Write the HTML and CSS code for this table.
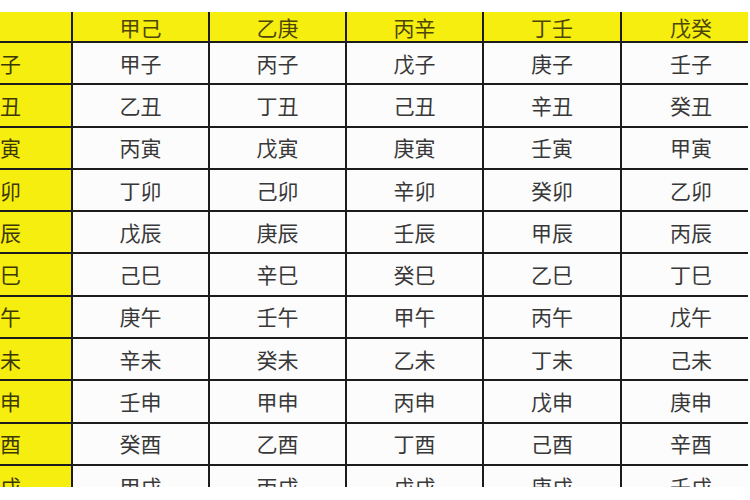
FILE: index.html
```html
<!DOCTYPE html>
<html lang="zh">
<head>
<meta charset="utf-8">
<link rel="stylesheet" href="styles.css">
</head>
<body>
<div class="frame">
  <div class="grid">
    <div class="cell head side"></div>
    <div class="cell head">甲己</div>
    <div class="cell head">乙庚</div>
    <div class="cell head">丙辛</div>
    <div class="cell head">丁壬</div>
    <div class="cell head">戊癸</div>

    <div class="cell side">子</div><div class="cell">甲子</div><div class="cell">丙子</div><div class="cell">戊子</div><div class="cell">庚子</div><div class="cell">壬子</div>
    <div class="cell side">丑</div><div class="cell">乙丑</div><div class="cell">丁丑</div><div class="cell">己丑</div><div class="cell">辛丑</div><div class="cell">癸丑</div>
    <div class="cell side">寅</div><div class="cell">丙寅</div><div class="cell">戊寅</div><div class="cell">庚寅</div><div class="cell">壬寅</div><div class="cell">甲寅</div>
    <div class="cell side">卯</div><div class="cell">丁卯</div><div class="cell">己卯</div><div class="cell">辛卯</div><div class="cell">癸卯</div><div class="cell">乙卯</div>
    <div class="cell side">辰</div><div class="cell">戊辰</div><div class="cell">庚辰</div><div class="cell">壬辰</div><div class="cell">甲辰</div><div class="cell">丙辰</div>
    <div class="cell side">巳</div><div class="cell">己巳</div><div class="cell">辛巳</div><div class="cell">癸巳</div><div class="cell">乙巳</div><div class="cell">丁巳</div>
    <div class="cell side">午</div><div class="cell">庚午</div><div class="cell">壬午</div><div class="cell">甲午</div><div class="cell">丙午</div><div class="cell">戊午</div>
    <div class="cell side">未</div><div class="cell">辛未</div><div class="cell">癸未</div><div class="cell">乙未</div><div class="cell">丁未</div><div class="cell">己未</div>
    <div class="cell side">申</div><div class="cell">壬申</div><div class="cell">甲申</div><div class="cell">丙申</div><div class="cell">戊申</div><div class="cell">庚申</div>
    <div class="cell side">酉</div><div class="cell">癸酉</div><div class="cell">乙酉</div><div class="cell">丁酉</div><div class="cell">己酉</div><div class="cell">辛酉</div>
    <div class="cell side">戌</div><div class="cell">甲戌</div><div class="cell">丙戌</div><div class="cell">戊戌</div><div class="cell">庚戌</div><div class="cell">壬戌</div>
  </div>
</div>
</body>
</html>
```

FILE: styles.css
```css
html, body {
  margin: 0;
  padding: 0;
  background: #ffffff;
}

.frame {
  width: 748px;
  height: 487px;
  padding-top: 12px;
  box-sizing: border-box;
  overflow: hidden;
}

.grid {
  display: grid;
  margin-left: -50px;
  grid-template-columns: 123px 137px 137px 137px 138px 140px;
  grid-template-rows: 31px repeat(11, 42.3px);
  font-family: "Noto Sans CJK SC", "Noto Sans CJK JP", sans-serif;
  font-size: 21px;
  color: #383838;
}

.cell {
  box-sizing: border-box;
  border-right: 2.5px solid #1c1c1c;
  border-bottom: 2.5px solid #1c1c1c;
  display: flex;
  align-items: center;
  justify-content: center;
  background: #fcfcfc;
  line-height: 1;
}

.head {
  background: #f6ee0e;
  color: #4d4608;
  padding-top: 1px;
}

.side {
  background: #f6ee0e;
  color: #3c3806;
}
```
